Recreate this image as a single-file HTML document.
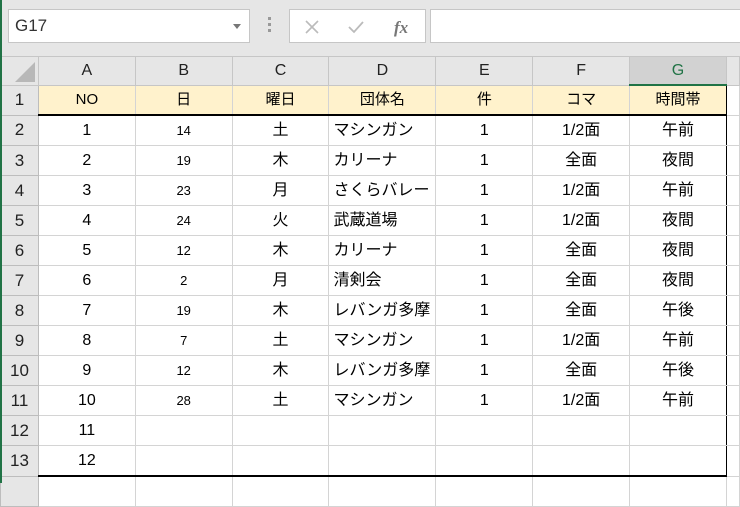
<!DOCTYPE html><html><head><meta charset="utf-8"><style>
body{margin:0;width:740px;height:483px;overflow:hidden;background:#e6e6e6;font-family:"Liberation Sans","Noto Sans CJK JP",sans-serif;position:relative}
.gl{position:absolute;left:0;top:0;width:2px;height:483px;background:#217346;z-index:5}
.nb{position:absolute;left:8px;top:9px;width:242px;height:34px;background:#fff;border:1px solid #c6c6c6;box-sizing:border-box;font-size:17px;color:#333;line-height:32px;padding-left:6px}
.nb .ar{position:absolute;right:8px;top:14px;border:4px solid transparent;border-top:5px solid #777}
.dots{position:absolute;left:268px;top:17px;width:3px;height:16px;background:repeating-linear-gradient(#999 0 3px,transparent 3px 6px)}
.fb{position:absolute;left:289px;top:9px;width:137px;height:34px;background:#fff;border:1px solid #c6c6c6;box-sizing:border-box}
.fx{position:absolute;left:430px;top:9px;width:320px;height:34px;background:#fff;border:1px solid #c6c6c6;box-sizing:border-box}
table{position:absolute;left:0;top:56px;border-collapse:collapse;table-layout:fixed;background:#fff}
td{border:1px solid #d4d4d4;padding:0;height:29px;line-height:18px;text-align:center;vertical-align:middle;font-size:16px;color:#000;overflow:hidden;white-space:nowrap}
tr.h td{background:#e6e6e6;height:27px;color:#222;border-color:#c6c6c6}
td.r{background:#e6e6e6;color:#222;border-color:#bdbdbd;font-size:17px}
td.l{text-align:left;padding-left:4px}
td.s{font-size:13px}
tr.y td{height:28px}
tr.y td:not(.r){background:#fff2cc;font-size:15px}
</style></head><body>
<div class="gl"></div>
<div class="nb">G17<span class="ar"></span></div>
<div class="dots"></div>
<div class="fb">
<svg width="137" height="34" style="position:absolute;left:0;top:0"><path d="M16 11l12 12M28 11l-12 12" stroke="#bbb" stroke-width="1.6"/><path d="M59 17l5 5 9-10" stroke="#bbb" stroke-width="1.8" fill="none"/><text x="104" y="23" font-family="Liberation Serif,serif" font-style="italic" font-weight="bold" font-size="17" fill="#777">fx</text></svg>
</div>
<div class="fx"></div>
<table>
<colgroup><col style="width:38px"><col style="width:97px"><col style="width:97px"><col style="width:97px"><col style="width:107px"><col style="width:97px"><col style="width:97px"><col style="width:97px"><col style="width:13px"></colgroup>
<tr class="h"><td style="position:relative"><svg width="30" height="24" style="position:absolute;left:6px;top:3px"><path d="M28 2L28 22 8 22Z" fill="#b8b8b8"/></svg></td><td>A</td><td>B</td><td>C</td><td>D</td><td>E</td><td>F</td><td style="background:#d2d2d2;color:#217346;border-bottom:2px solid #217346">G</td><td></td></tr>
<tr class="y"><td class="r">1</td><td style="border-left:1px solid #000;border-top:1px solid #000;border-bottom:2px solid #000">NO</td><td style="border-top:1px solid #000;border-bottom:2px solid #000">日</td><td style="border-top:1px solid #000;border-bottom:2px solid #000">曜日</td><td style="border-top:1px solid #000;border-bottom:2px solid #000">団体名</td><td style="border-top:1px solid #000;border-bottom:2px solid #000">件</td><td style="border-top:1px solid #000;border-bottom:2px solid #000">コマ</td><td style="border-top:1px solid #000;border-right:1px solid #000;border-bottom:2px solid #000">時間帯</td><td style="background:#fff"></td></tr>
<tr><td class="r">2</td><td style="border-left:1px solid #000">1</td><td class="s">14</td><td>土</td><td class="l">マシンガン</td><td>1</td><td>1/2面</td><td style="border-right:1px solid #000">午前</td><td></td></tr>
<tr><td class="r">3</td><td style="border-left:1px solid #000">2</td><td class="s">19</td><td>木</td><td class="l">カリーナ</td><td>1</td><td>全面</td><td style="border-right:1px solid #000">夜間</td><td></td></tr>
<tr><td class="r">4</td><td style="border-left:1px solid #000">3</td><td class="s">23</td><td>月</td><td class="l">さくらバレー</td><td>1</td><td>1/2面</td><td style="border-right:1px solid #000">午前</td><td></td></tr>
<tr><td class="r">5</td><td style="border-left:1px solid #000">4</td><td class="s">24</td><td>火</td><td class="l">武蔵道場</td><td>1</td><td>1/2面</td><td style="border-right:1px solid #000">夜間</td><td></td></tr>
<tr><td class="r">6</td><td style="border-left:1px solid #000">5</td><td class="s">12</td><td>木</td><td class="l">カリーナ</td><td>1</td><td>全面</td><td style="border-right:1px solid #000">夜間</td><td></td></tr>
<tr><td class="r">7</td><td style="border-left:1px solid #000">6</td><td class="s">2</td><td>月</td><td class="l">清剣会</td><td>1</td><td>全面</td><td style="border-right:1px solid #000">夜間</td><td></td></tr>
<tr><td class="r">8</td><td style="border-left:1px solid #000">7</td><td class="s">19</td><td>木</td><td class="l">レバンガ多摩</td><td>1</td><td>全面</td><td style="border-right:1px solid #000">午後</td><td></td></tr>
<tr><td class="r">9</td><td style="border-left:1px solid #000">8</td><td class="s">7</td><td>土</td><td class="l">マシンガン</td><td>1</td><td>1/2面</td><td style="border-right:1px solid #000">午前</td><td></td></tr>
<tr><td class="r">10</td><td style="border-left:1px solid #000">9</td><td class="s">12</td><td>木</td><td class="l">レバンガ多摩</td><td>1</td><td>全面</td><td style="border-right:1px solid #000">午後</td><td></td></tr>
<tr><td class="r">11</td><td style="border-left:1px solid #000">10</td><td class="s">28</td><td>土</td><td class="l">マシンガン</td><td>1</td><td>1/2面</td><td style="border-right:1px solid #000">午前</td><td></td></tr>
<tr><td class="r">12</td><td style="border-left:1px solid #000">11</td><td></td><td></td><td></td><td></td><td></td><td style="border-right:1px solid #000"></td><td></td></tr>
<tr><td class="r">13</td><td style="border-left:1px solid #000;border-bottom:2px solid #000">12</td><td style="border-bottom:2px solid #000"></td><td style="border-bottom:2px solid #000"></td><td style="border-bottom:2px solid #000"></td><td style="border-bottom:2px solid #000"></td><td style="border-bottom:2px solid #000"></td><td style="border-right:1px solid #000;border-bottom:2px solid #000"></td><td></td></tr>
<tr><td class="r"></td><td></td><td></td><td></td><td></td><td></td><td></td><td></td><td></td></tr>
</table>
</body></html>
